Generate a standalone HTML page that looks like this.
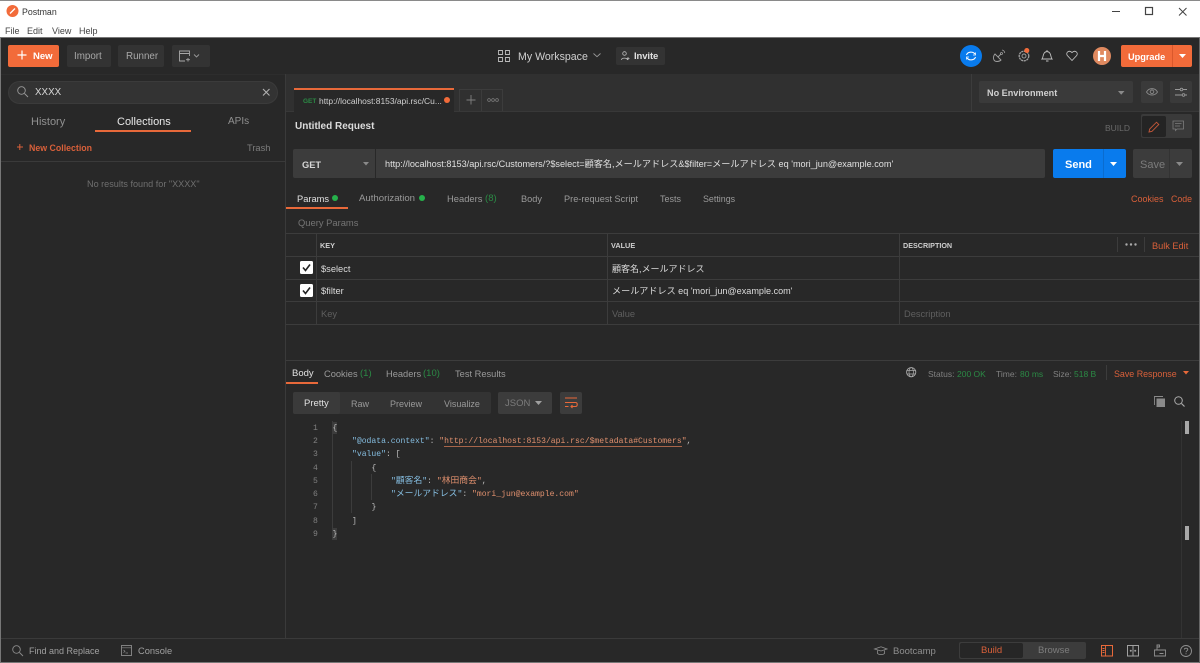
<!DOCTYPE html>
<html><head><meta charset="utf-8"><style>
html,body{margin:0;padding:0;width:1200px;height:663px;overflow:hidden;background:#282828}
#r{position:relative;width:1200px;height:663px;overflow:hidden;background:#282828;font-family:"Liberation Sans","Noto Sans CJK JP",sans-serif;filter:blur(.35px)}
.t{position:absolute;white-space:pre;line-height:14px;font-size:10px;color:#9a9a9a;transform:translateY(-6px)}
.b{position:absolute;box-sizing:border-box}
.o{color:#d9603a}.g{color:#2b8a45}.w{color:#e6e6e6}.dim{color:#5f5f5f}
.m{font-family:"Liberation Mono","Noto Sans CJK JP",monospace;font-size:8.08px;line-height:13px;color:#bdbdbd}
.blue{color:#85bde0}.str{color:#e0906e}
.j{font-size:8.8px}
svg{position:absolute;overflow:visible;fill:none}
</style></head><body><div id="r">
<!-- title bar -->
<div class="b" style="left:0;top:0;width:1200px;height:38px;background:#fff"></div>
<div class="b" style="left:0;top:0;width:1200px;height:1px;background:#8a8a8a"></div>
<svg style="left:6px;top:5px" width="13" height="13" viewBox="0 0 13 13"><circle cx="6.500" cy="6" r="6" fill="#f26b3a"/><path d="M4 8.500L9 3.500" stroke="#fff" stroke-width="1.300"/></svg>
<div class="t" style="left:22px;top:11px;color:#333;font-size:8.800px">Postman</div>
<div class="t" style="left:5px;top:30px;color:#444;font-size:9px">File</div>
<div class="t" style="left:27px;top:30px;color:#444;font-size:9px">Edit</div>
<div class="t" style="left:52px;top:30px;color:#444;font-size:9px">View</div>
<div class="t" style="left:79px;top:30px;color:#444;font-size:9px">Help</div>
<svg style="left:1112px;top:5px" width="80" height="14"><path d="M0 6.500H8" stroke="#444"/><rect x="33.500" y="2.500" width="7" height="7" stroke="#444" stroke-width="1.200"/><path d="M67 3L74.500 10.500M74.500 3L67 10.500" stroke="#444"/></svg>
<div class="b" style="left:0;top:37px;width:1200px;height:1px;background:#777"></div>

<!-- header -->
<div class="b" style="left:8px;top:45px;width:51px;height:22px;background:#f26b3a;border-radius:2px"></div>
<svg style="left:17px;top:50px" width="11" height="11"><path d="M5 .5V9.500M.5 5H9.500" stroke="#fff" stroke-width="1.200"/></svg>
<div class="t" style="left:33px;top:56px;color:#fff;font-weight:bold;font-size:9.500px">New</div>
<div class="b" style="left:67px;top:45px;width:44px;height:22px;background:#333;border-radius:2px"></div>
<div class="t" style="left:74px;top:56px;font-size:9.800px;color:#a8a8a8">Import</div>
<div class="b" style="left:118px;top:45px;width:46px;height:22px;background:#333;border-radius:2px"></div>
<div class="t" style="left:126px;top:56px;font-size:9.800px;color:#a8a8a8">Runner</div>
<div class="b" style="left:172px;top:45px;width:38px;height:22px;background:#333;border-radius:2px"></div>
<svg style="left:179px;top:50px" width="24" height="12"><path d="M6 11H.5V1H10.500V6M.5 3.500H10.500M9 8V11.500M7 9.700H11" stroke="#a8a8a8" stroke-width=".9"/><path d="M15 4.500L17.500 7L20 4.500" stroke="#999" stroke-width=".9"/></svg>

<svg style="left:498px;top:50px" width="12" height="12"><path d="M.5.5H4.500V4.500H.5ZM7.500.5H11.500V4.500H7.500ZM.5 7.500H4.500V11.500H.5ZM7.500 7.500H11.500V11.500H7.500Z" stroke="#bbb" stroke-width=".9"/></svg>
<div class="t" style="left:518px;top:56px;font-size:10.600px;color:#d0d0d0">My Workspace</div>
<svg style="left:593px;top:53px" width="8" height="5"><path d="M.5.5L4 3.700L7.500.5" stroke="#999" stroke-width=".9"/></svg>
<div class="b" style="left:616px;top:47px;width:49px;height:18px;background:#333;border-radius:2px"></div>
<svg style="left:621px;top:51px" width="9" height="10"><circle cx="3.500" cy="2.500" r="1.800" stroke="#bbb" stroke-width=".8"/><path d="M.5 9C.5 6.500 6 6.500 6.500 9M7 6V9M5.500 7.500H8.500" stroke="#bbb" stroke-width=".8"/></svg>
<div class="t" style="left:634px;top:56px;font-size:9.500px;color:#e0e0e0;font-weight:bold;letter-spacing:-.1px">Invite</div>

<svg style="left:960px;top:45px" width="23" height="22"><circle cx="11" cy="11" r="11" fill="#097bed"/><path d="M6.500 10C7.500 6.800 12.500 6 15 9M15.500 12C14.500 15.200 9.500 16 7 13" stroke="#fff" stroke-width="1.100"/><path d="M15.500 7.500V10H13M6.500 14.500V12H9" stroke="#fff" stroke-width=".8"/></svg>
<svg style="left:992px;top:49px" width="14" height="14"><path d="M3 5L9 11C7 13 3 13 2 11C1 9 1.500 6.500 3 5ZM6 8L9 5" stroke="#a0a0a0" stroke-width=".9"/><circle cx="9.500" cy="4.500" r="1" stroke="#a0a0a0" stroke-width=".8"/><path d="M10 1C11.500 1.200 12.500 2.500 12.800 4" stroke="#a0a0a0" stroke-width=".8"/></svg>
<svg style="left:1018px;top:48px" width="14" height="15"><circle cx="6" cy="8" r="4.800" stroke="#a0a0a0" stroke-width="1.300" stroke-dasharray="2.200 .6"/><circle cx="6" cy="8" r="2" stroke="#a0a0a0" stroke-width=".9"/><circle cx="8.800" cy="2.500" r="2.500" fill="#f26b3a"/></svg>
<svg style="left:1041px;top:49px" width="12" height="14"><path d="M1 10C2.500 8.500 1.500 3 6 2.500C10.500 3 9.500 8.500 11 10ZM5 12H7.500M6 1V2.500" stroke="#c0c0c0" stroke-width=".9"/></svg>
<svg style="left:1066px;top:50px" width="12" height="11"><path d="M6 10.500L1.300 5.500C-.5 3 2.500-.5 6 2.500C9.500-.5 12.500 3 10.700 5.500Z" stroke="#c0c0c0" stroke-width=".9"/></svg>
<svg style="left:1093px;top:47px" width="18" height="18"><circle cx="9" cy="9" r="9" fill="#e08a60"/><path d="M6 4V14M12 4V14M6 9H12" stroke="#fff" stroke-width="2.200"/></svg>
<div class="b" style="left:1121px;top:45px;width:71px;height:22px;background:#f26b3a;border-radius:2px"></div>
<div class="b" style="left:1172px;top:45px;width:1px;height:22px;background:#d9582c"></div>
<div class="t" style="left:1128px;top:56px;color:#fff;font-weight:bold;font-size:9.200px">Upgrade</div>
<svg style="left:1179px;top:54px" width="8" height="5"><path d="M0 0H7L3.500 4Z" fill="#fff"/></svg>

<!-- sidebar -->
<div class="b" style="left:285px;top:74px;width:1px;height:564px;background:#3a3a3a"></div>
<div class="b" style="left:0;top:74px;width:285px;height:1px;background:#2d2d2d"></div>
<div class="b" style="left:8px;top:81px;width:270px;height:23px;background:#333;border:1px solid #3b3b3b;border-radius:12px"></div>
<svg style="left:17px;top:86px" width="12" height="12"><circle cx="4.500" cy="4.500" r="3.800" stroke="#999" stroke-width=".9"/><path d="M7.500 7.500L11 11" stroke="#999" stroke-width=".9"/></svg>
<div class="t" style="left:35px;top:92px;font-size:9.800px;color:#d8d8d8">XXXX</div>
<svg style="left:262px;top:88px" width="9" height="9"><path d="M1 1L7.500 7.500M7.500 1L1 7.500" stroke="#b0b0b0" stroke-width="1.100"/></svg>
<div class="t" style="left:31px;top:120.500px;font-size:11px;color:#909090">History</div>
<div class="t" style="left:117px;top:120.500px;font-size:11px;color:#e8e8e8">Collections</div>
<div class="b" style="left:95px;top:130px;width:96px;height:2px;background:#e8693a"></div>
<div class="t" style="left:228px;top:120.500px;font-size:10px;color:#909090">APIs</div>
<svg style="left:17px;top:144px" width="6" height="6"><path d="M2.800 0V6M0 3H6" stroke="#d9603a"/></svg>
<div class="t" style="left:29px;top:147px;font-size:8.800px;font-weight:bold;color:#d9603a">New Collection</div>
<div class="t" style="left:247px;top:147px;font-size:9.300px;color:#7d7d7d">Trash</div>
<div class="b" style="left:0;top:161px;width:285px;height:1px;background:#3a3a3a"></div>
<div class="t" style="left:87px;top:183px;font-size:9.100px;color:#6f6f6f">No results found for "XXXX"</div>

<!-- tab bar -->
<div class="b" style="left:286px;top:74px;width:914px;height:37px;background:#303030"></div>
<div class="b" style="left:286px;top:111px;width:914px;height:1px;background:#383838"></div>
<div class="b" style="left:971px;top:74px;width:1px;height:37px;background:#3c3c3c"></div>
<div class="b" style="left:294px;top:88px;width:160px;height:24px;background:#282828;border-top:2px solid #e8693a"></div>
<div class="t" style="left:303px;top:100.500px;font-size:6.500px;font-weight:bold;color:#2b8a45">GET</div>
<div class="t" style="left:319px;top:100px;font-size:8.450px;color:#d0d0d0">http://localhost:8153/api.rsc/Cu...</div>
<div class="b" style="left:444px;top:97px;width:6px;height:6px;background:#f26b3a;border-radius:50%"></div>
<div class="b" style="left:459px;top:89px;width:44px;height:22px;border:1px solid #3c3c3c;border-bottom:0"></div>
<div class="b" style="left:481px;top:89px;width:1px;height:22px;background:#3c3c3c"></div>
<svg style="left:466px;top:95px" width="10" height="10"><path d="M5 0V9.500M.5 5H9.500" stroke="#808080" stroke-width=".9"/></svg>
<svg style="left:487px;top:98px" width="12" height="5"><circle cx="2" cy="2" r="1.400" stroke="#808080" stroke-width=".7"/><circle cx="6" cy="2" r="1.400" stroke="#808080" stroke-width=".7"/><circle cx="10" cy="2" r="1.400" stroke="#808080" stroke-width=".7"/></svg>

<div class="b" style="left:979px;top:81px;width:154px;height:22px;background:#3a3a3a;border-radius:2px"></div>
<div class="t" style="left:987px;top:92px;font-size:9.100px;font-weight:bold;color:#d0d0d0">No Environment</div>
<svg style="left:1118px;top:91px" width="8" height="5"><path d="M0 0H6.500L3.200 3.800Z" fill="#8a8a8a"/></svg>
<div class="b" style="left:1141px;top:81px;width:22px;height:22px;background:#3a3a3a;border-radius:2px"></div>
<svg style="left:1146px;top:87px" width="13" height="10"><path d="M.5 5C3 .5 9 .5 11.500 5C9 9 3 9 .5 5Z" stroke="#8a8a8a" stroke-width=".9"/><circle cx="6" cy="4.800" r="1.800" stroke="#8a8a8a" stroke-width=".9"/></svg>
<div class="b" style="left:1170px;top:81px;width:22px;height:22px;background:#3a3a3a;border-radius:2px"></div>
<svg style="left:1175px;top:88px" width="13" height="10"><path d="M0 1.500H5M8 1.500H12M0 7H7M10 7H12" stroke="#999" stroke-width=".9"/><circle cx="6.500" cy="1.500" r="1.300" stroke="#999" stroke-width=".8"/><circle cx="8.500" cy="7" r="1.300" stroke="#999" stroke-width=".8"/></svg>

<!-- request -->
<div class="t" style="left:295px;top:126px;font-size:10px;font-weight:bold;color:#dcdcdc">Untitled Request</div>
<div class="t" style="left:1105px;top:126.500px;font-size:8.500px;color:#6a6a6a">BUILD</div>
<div class="b" style="left:1141px;top:114px;width:51px;height:24px;background:#3a3a3a;border-radius:2px"></div>
<div class="b" style="left:1142px;top:116px;width:24px;height:21px;background:#242424;border-radius:2px"></div>
<svg style="left:1148px;top:121px" width="12" height="12"><path d="M1 11L1.700 8L8.500 1.200L10.800 3.500L4 10.300Z" stroke="#c4583a" stroke-width=".9"/></svg>
<svg style="left:1172px;top:120px" width="13" height="12"><path d="M1 1H11.500V9H5L3.500 10.500V9H1ZM3 3.500H9.500M3 6H8" stroke="#7d7d7d" stroke-width=".8"/></svg>

<div class="b" style="left:293px;top:149px;width:82px;height:29px;background:#3c3c3c;border-radius:2px 0 0 2px"></div>
<div class="t" style="left:302px;top:163.500px;font-size:9.300px;font-weight:bold;color:#d6d6d6">GET</div>
<svg style="left:363px;top:162px" width="7" height="5"><path d="M0 0H6L3 3.500Z" fill="#8a8a8a"/></svg>
<div class="b" style="left:376px;top:149px;width:669px;height:29px;background:#3c3c3c;border-radius:0 2px 2px 0"></div>
<div class="t" style="left:385px;top:163px;font-size:9.150px;color:#e0e0e0">http://localhost:8153/api.rsc/Customers/?$select=顧客名,メールアドレス&amp;$filter=メールアドレス eq 'mori_jun@example.com'</div>
<div class="b" style="left:1053px;top:149px;width:73px;height:29px;background:#097bed;border-radius:2px"></div>
<div class="b" style="left:1103px;top:149px;width:1px;height:29px;background:#0a6ccf"></div>
<div class="t" style="left:1065px;top:164px;font-size:11px;font-weight:bold;color:#fff">Send</div>
<svg style="left:1110px;top:162px" width="8" height="5"><path d="M0 0H7L3.500 4Z" fill="#fff"/></svg>
<div class="b" style="left:1133px;top:149px;width:59px;height:29px;background:#3c3c3c;border-radius:2px"></div>
<div class="b" style="left:1169px;top:149px;width:1px;height:29px;background:#333"></div>
<div class="t" style="left:1140px;top:164px;font-size:11px;color:#7c7c7c">Save</div>
<svg style="left:1176px;top:162px" width="8" height="5"><path d="M0 0H7L3.500 4Z" fill="#8a8a8a"/></svg>

<div class="t" style="left:297px;top:198px;font-size:9.300px;color:#e0e0e0">Params</div>
<div class="b" style="left:331.500px;top:195px;width:6px;height:6px;background:#26b14b;border-radius:50%"></div>
<div class="b" style="left:286px;top:207px;width:62px;height:2px;background:#e8693a"></div>
<div class="t" style="left:359px;top:198px;font-size:9.600px">Authorization</div>
<div class="b" style="left:419px;top:195px;width:6px;height:6px;background:#26b14b;border-radius:50%"></div>
<div class="t" style="left:447px;top:198px;font-size:9.400px">Headers</div>
<div class="t g" style="left:485px;top:198px;font-size:9.600px">(8)</div>
<div class="t" style="left:521px;top:198px;font-size:9.200px">Body</div>
<div class="t" style="left:564px;top:198px;font-size:9.200px">Pre-request Script</div>
<div class="t" style="left:660px;top:198px;font-size:9px">Tests</div>
<div class="t" style="left:703px;top:198px;font-size:8.900px">Settings</div>
<div class="t o" style="left:1131px;top:198px;font-size:9px">Cookies</div>
<div class="t o" style="left:1171px;top:198px;font-size:8.800px">Code</div>
<div class="t" style="left:298px;top:222px;font-size:9.400px;color:#757575">Query Params</div>

<!-- table -->
<div class="b" style="left:286px;top:233px;width:914px;height:1px;background:#3c3c3c"></div>
<div class="b" style="left:286px;top:256px;width:914px;height:1px;background:#3c3c3c"></div>
<div class="b" style="left:286px;top:279px;width:914px;height:1px;background:#3c3c3c"></div>
<div class="b" style="left:286px;top:301px;width:914px;height:1px;background:#3c3c3c"></div>
<div class="b" style="left:286px;top:324px;width:914px;height:1px;background:#3c3c3c"></div>
<div class="b" style="left:316px;top:233px;width:1px;height:91px;background:#3c3c3c"></div>
<div class="b" style="left:607px;top:233px;width:1px;height:91px;background:#3c3c3c"></div>
<div class="b" style="left:899px;top:233px;width:1px;height:91px;background:#3c3c3c"></div>
<div class="t" style="left:320px;top:245px;font-size:7.300px;font-weight:bold;color:#cfcfcf">KEY</div>
<div class="t" style="left:611px;top:245px;font-size:7.300px;font-weight:bold;color:#cfcfcf">VALUE</div>
<div class="t" style="left:903px;top:245px;font-size:7.200px;font-weight:bold;color:#cfcfcf">DESCRIPTION</div>
<div class="b" style="left:1117px;top:237px;width:1px;height:15px;background:#3c3c3c"></div>
<div class="b" style="left:1144px;top:237px;width:1px;height:15px;background:#3c3c3c"></div>
<svg style="left:1125px;top:243px" width="13" height="4"><circle cx="1.500" cy="1.500" r="1.200" fill="#aaa"/><circle cx="6" cy="1.500" r="1.200" fill="#aaa"/><circle cx="10.500" cy="1.500" r="1.200" fill="#aaa"/></svg>
<div class="t o" style="left:1152px;top:245px;font-size:9.200px">Bulk Edit</div>

<svg style="left:300px;top:261px" width="13" height="13"><rect width="13" height="13" rx="1.500" fill="#fff"/><path d="M3 6.500L5.500 9.500L10 3.500" stroke="#222" stroke-width="1.600"/></svg>
<svg style="left:300px;top:284px" width="13" height="13"><rect width="13" height="13" rx="1.500" fill="#fff"/><path d="M3 6.500L5.500 9.500L10 3.500" stroke="#222" stroke-width="1.600"/></svg>
<div class="t" style="left:321px;top:267.500px;font-size:9.300px;color:#dcdcdc">$select</div>
<div class="t" style="left:321px;top:290px;font-size:9.300px;color:#dcdcdc">$filter</div>
<div class="t" style="left:612px;top:267.500px;font-size:9px;color:#dcdcdc">顧客名,メールアドレス</div>
<div class="t" style="left:612px;top:290px;font-size:9.100px;color:#dcdcdc">メールアドレス eq 'mori_jun@example.com'</div>
<div class="t dim" style="left:321px;top:313px;font-size:9.300px">Key</div>
<div class="t dim" style="left:612px;top:313px;font-size:9.300px">Value</div>
<div class="t dim" style="left:904px;top:313px;font-size:9.300px">Description</div>

<!-- response -->
<div class="b" style="left:286px;top:360px;width:914px;height:1px;background:#3c3c3c"></div>
<div class="t" style="left:292px;top:372.500px;font-size:9.500px;color:#e0e0e0">Body</div>
<div class="b" style="left:286px;top:382px;width:32px;height:2px;background:#e8693a"></div>
<div class="t" style="left:324px;top:372.500px;font-size:9.300px">Cookies</div>
<div class="t g" style="left:360px;top:372.500px;font-size:9.500px">(1)</div>
<div class="t" style="left:386px;top:372.500px;font-size:9.300px">Headers</div>
<div class="t g" style="left:423px;top:372.500px;font-size:9.500px">(10)</div>
<div class="t" style="left:455px;top:372.500px;font-size:9.300px">Test Results</div>
<svg style="left:906px;top:367px" width="11" height="11"><circle cx="5.200" cy="5.200" r="4.600" stroke="#aaa" stroke-width=".9"/><ellipse cx="5.200" cy="5.200" rx="2.200" ry="4.600" stroke="#aaa" stroke-width=".7"/><path d="M.8 3.500H9.700M.8 7H9.700" stroke="#aaa" stroke-width=".7"/></svg>
<div class="t" style="left:928px;top:372.500px;font-size:8.500px;color:#808080">Status:</div>
<div class="t g" style="left:957px;top:372.500px;font-size:8.500px">200 OK</div>
<div class="t" style="left:996px;top:372.500px;font-size:8.500px;color:#808080">Time:</div>
<div class="t g" style="left:1020px;top:372.500px;font-size:8.500px">80 ms</div>
<div class="t" style="left:1053px;top:372.500px;font-size:8.500px;color:#808080">Size:</div>
<div class="t g" style="left:1074px;top:372.500px;font-size:8.500px">518 B</div>
<div class="b" style="left:1106px;top:365px;width:1px;height:15px;background:#3c3c3c"></div>
<div class="t o" style="left:1114px;top:372.500px;font-size:8.900px">Save Response</div>
<svg style="left:1183px;top:371px" width="7" height="5"><path d="M0 0H6L3 3.500Z" fill="#e8693a"/></svg>

<div class="b" style="left:293px;top:392px;width:198px;height:22px;background:#333;border-radius:2px"></div>
<div class="b" style="left:293px;top:392px;width:47px;height:22px;background:#3a3a3a;border-radius:2px"></div>
<div class="t" style="left:304px;top:403px;font-size:9.500px;color:#e0e0e0">Pretty</div>
<div class="t" style="left:351px;top:403px;font-size:9px">Raw</div>
<div class="t" style="left:390px;top:403px;font-size:9px">Preview</div>
<div class="t" style="left:444px;top:403px;font-size:9px">Visualize</div>
<div class="b" style="left:498px;top:392px;width:54px;height:22px;background:#3c3c3c;border-radius:2px"></div>
<div class="t" style="left:505px;top:403px;font-size:9.500px;color:#7c7c7c">JSON</div>
<svg style="left:535px;top:401px" width="8" height="5"><path d="M0 0H7L3.500 4Z" fill="#a0a0a0"/></svg>
<div class="b" style="left:560px;top:392px;width:22px;height:22px;background:#3c3c3c;border-radius:2px"></div>
<svg style="left:565px;top:397px" width="13" height="12"><path d="M0 1H12M0 5.500H10.500C12.800 5.500 12.800 9.500 10.500 9.500H6M0 9.500H3.500M7.500 8L6 9.500L7.500 11" stroke="#e8693a" stroke-width="1.100"/></svg>
<svg style="left:1154px;top:396px" width="12" height="12"><path d="M.5 9V.5H9" stroke="#8a8a8a" stroke-width=".9"/><rect x="2.500" y="2.500" width="8.500" height="8.500" fill="#8a8a8a"/></svg>
<svg style="left:1174px;top:396px" width="12" height="12"><circle cx="4.500" cy="4.500" r="3.800" stroke="#aaa"/><path d="M7.500 7.500L10.500 10.500" stroke="#aaa" stroke-width="1.200"/></svg>

<!-- code -->
<div class="t m" style="left:313px;top:427.500px;color:#808080">1</div>
<div class="t m" style="left:313px;top:441px;color:#808080">2</div>
<div class="t m" style="left:313px;top:454px;color:#808080">3</div>
<div class="t m" style="left:313px;top:467.500px;color:#808080">4</div>
<div class="t m" style="left:313px;top:480.500px;color:#808080">5</div>
<div class="t m" style="left:313px;top:494px;color:#808080">6</div>
<div class="t m" style="left:313px;top:507px;color:#808080">7</div>
<div class="t m" style="left:313px;top:520.500px;color:#808080">8</div>
<div class="t m" style="left:313px;top:533.500px;color:#808080">9</div>
<div class="b" style="left:332px;top:421px;width:1px;height:118px;background:#3c3c3c"></div>
<div class="b" style="left:351px;top:461px;width:1px;height:52px;background:#3c3c3c"></div>
<div class="b" style="left:371px;top:474px;width:1px;height:26px;background:#3c3c3c"></div>
<div class="b" style="left:332px;top:422px;width:5px;height:12px;background:#3c3c3c"></div>
<div class="b" style="left:332px;top:528px;width:5px;height:12px;background:#3c3c3c"></div>
<div class="t m" style="left:332.500px;top:427.500px">{</div>
<div class="t m" style="left:352px;top:441px"><span class="blue">"@odata.context"</span>: <span class="str">"</span><span class="str" style="border-bottom:1px solid #a8654a">http://localhost:8153/api.rsc/$metadata#Customers</span><span class="str">"</span>,</div>
<div class="t m" style="left:352px;top:454px"><span class="blue">"value"</span>: [</div>
<div class="t m" style="left:371.500px;top:467.500px">{</div>
<div class="t m" style="left:391px;top:480.500px"><span class="blue">"<span class="j">顧客名</span>"</span>: <span class="str">"<span class="j">林田商会</span>"</span>,</div>
<div class="t m" style="left:391px;top:494px"><span class="blue">"<span class="j">メールアドレス</span>"</span>: <span class="str">"mori_jun@example.com"</span></div>
<div class="t m" style="left:371.500px;top:507px">}</div>
<div class="t m" style="left:352px;top:520.500px">]</div>
<div class="t m" style="left:332.500px;top:533.500px">}</div>
<div class="b" style="left:1181px;top:421px;width:1px;height:217px;background:#333"></div>
<div class="b" style="left:1185px;top:421px;width:4px;height:13px;background:#a8a8a8"></div>
<div class="b" style="left:1185px;top:526px;width:4px;height:14px;background:#a8a8a8"></div>

<!-- status bar -->
<div class="b" style="left:0;top:638px;width:1200px;height:1px;background:#3a3a3a"></div>
<svg style="left:12px;top:645px" width="12" height="12"><circle cx="4.500" cy="4.500" r="3.800" stroke="#8a8a8a" stroke-width=".9"/><path d="M7.500 7.500L11 11" stroke="#8a8a8a" stroke-width=".9"/></svg>
<div class="t" style="left:29px;top:650px;font-size:9px;color:#a0a0a0">Find and Replace</div>
<svg style="left:121px;top:645px" width="12" height="12"><rect x=".5" y=".5" width="10" height="10" stroke="#8a8a8a" stroke-width=".9"/><path d="M.5 2.800H10.500M2.500 5L4 6.300L2.500 7.600M4.500 8H7" stroke="#8a8a8a" stroke-width=".7"/></svg>
<div class="t" style="left:138px;top:650px;font-size:9.300px;color:#a0a0a0">Console</div>
<svg style="left:874px;top:646px" width="14" height="10"><path d="M.5 3L7 .8L13 3L7 5ZM3.500 4.500V7.500C5 9 9 9 10.500 7.500V4.500" stroke="#909090" stroke-width=".8"/></svg>
<div class="t" style="left:893px;top:650.500px;font-size:9.500px;color:#8e8e8e">Bootcamp</div>
<div class="b" style="left:959px;top:642px;width:127px;height:17px;background:#3c3c3c;border-radius:2px"></div>
<div class="b" style="left:960px;top:643px;width:63px;height:15px;background:#262626;border-radius:2px"></div>
<div class="t" style="left:981px;top:650px;font-size:9.500px;color:#d9603a">Build</div>
<div class="t" style="left:1038px;top:650px;font-size:9.500px;color:#7d7d7d">Browse</div>
<svg style="left:1101px;top:645px" width="12" height="12"><rect x=".5" y=".5" width="11" height="10.500" stroke="#e8693a"/><path d="M4.500.5V11M1.500 3.500H3.500M1.500 5.500H3.500M1.500 7.500H3.500" stroke="#e8693a" stroke-width=".9"/></svg>
<svg style="left:1127px;top:645px" width="12" height="12"><rect x=".5" y=".5" width="11" height="10.500" stroke="#a0a0a0"/><path d="M6 .5V11" stroke="#a0a0a0"/><circle cx="3.800" cy="5.800" r="1" fill="#a0a0a0"/><circle cx="8.200" cy="5.800" r="1" fill="#a0a0a0"/></svg>
<svg style="left:1154px;top:644px" width="12" height="13"><path d="M.5 6H11.500V12H.5ZM3 6V1H5.500V3H3M5.500 9.500H9.500" stroke="#909090" stroke-width=".9"/></svg>
<svg style="left:1180px;top:645px" width="12" height="12"><circle cx="6" cy="6" r="5.500" stroke="#909090" stroke-width=".9"/><path d="M4.300 4.500C4.500 2.700 7.800 2.800 7.800 4.500C7.800 5.700 6 5.700 6 7.300M6 8.300V9.300" stroke="#909090" stroke-width=".9"/></svg>
<div class="b" style="left:0;top:662px;width:1200px;height:1px;background:#777"></div>
<div class="b" style="left:0;top:38px;width:1px;height:625px;background:#777"></div>
<div class="b" style="left:1199px;top:38px;width:1px;height:625px;background:#666"></div>
</div></body></html>
